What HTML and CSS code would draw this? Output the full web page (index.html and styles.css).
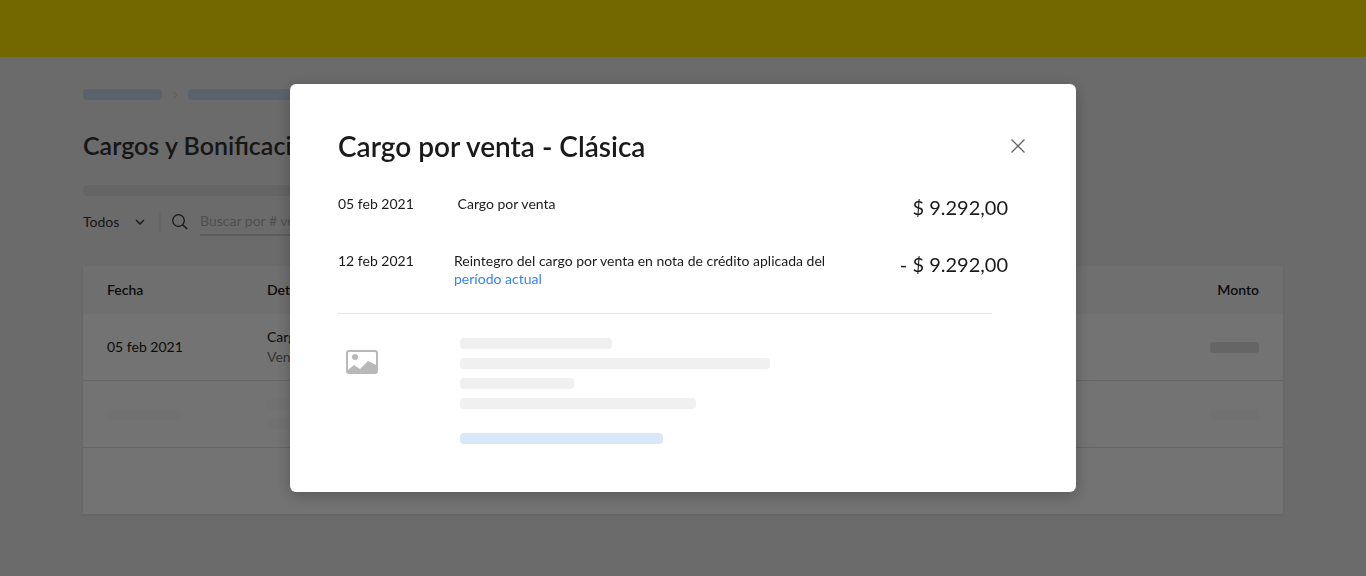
FILE: index.html
```
<!DOCTYPE html>
<html lang="es">
<head>
    <meta charset="UTF-8">
    <meta name="viewport" content="width=device-width, initial-scale=1.0">
    <title>Cargos y Bonificaciones</title>
    <link rel="stylesheet" href="styles.css">
</head>
<body>
    <header class="navbar"></header>

    <main class="page">
        <div class="breadcrumb">
            <span class="bar bar-link w-79"></span>
            <svg class="chevron" width="6" height="8" viewBox="0 0 6 8"><path d="M1 0.5 L5 4 L1 7.5" fill="none" stroke="#d0d0d0" stroke-width="1"/></svg>
            <span class="bar bar-link w-203"></span>
        </div>
        <h1>Cargos y Bonificaciones</h1>
        <div class="bar bar-intro"></div>

        <div class="filters">
            <select class="filter-select" aria-label="Filtrar">
                <option>Todos</option>
            </select>
            <svg class="arrow" width="10" height="6" viewBox="0 0 10 6"><path d="M1 1 L5 5 L9 1" fill="none" stroke="#333" stroke-width="1.4"/></svg>
            <label class="search">
                <svg width="16" height="16" viewBox="0 0 16 16"><circle cx="6.5" cy="6.5" r="5.8" fill="none" stroke="#333" stroke-width="1.3"/><path d="M10.7 10.7 L15.2 15" stroke="#333" stroke-width="1.5"/></svg>
                <input type="text" placeholder="Buscar por # venta" aria-label="Buscar por # venta">
            </label>
        </div>

        <table class="charges">
            <thead>
                <tr>
                    <th class="col-date">Fecha</th>
                    <th>Detalle</th>
                    <th class="col-amount">Monto</th>
                </tr>
            </thead>
            <tbody>
                <tr>
                    <td>05 feb 2021</td>
                    <td>Cargo por venta<br><span class="muted">Venta</span></td>
                    <td class="col-amount"><span class="bar bar-dark w-49"></span></td>
                </tr>
                <tr>
                    <td><span class="bar bar-faint w-73"></span></td>
                    <td>
                        <div class="bar bar-faint w-152"></div>
                        <div class="bar bar-faint bar-next w-114"></div>
                    </td>
                    <td class="col-amount"><span class="bar bar-faint w-49"></span></td>
                </tr>
                <tr>
                    <td></td>
                    <td></td>
                    <td></td>
                </tr>
            </tbody>
        </table>
    </main>

    <div class="overlay">
        <section class="modal" role="dialog" aria-modal="true" aria-labelledby="modal-title">
            <div class="modal-header">
                <h2 id="modal-title">Cargo por venta - Clásica</h2>
                <button class="close" type="button" aria-label="Cerrar">
                    <svg width="14" height="14" viewBox="0 0 14 14"><path d="M0.5 0.5 L13.5 13.5 M13.5 0.5 L0.5 13.5" stroke="#666" stroke-width="1.3"/></svg>
                </button>
            </div>

            <div class="movement">
                <span class="date">05 feb 2021</span>
                <p class="description">&nbsp;Cargo por venta</p>
                <span class="amount">$ 9.292,00</span>
            </div>
            <div class="movement">
                <span class="date">12 feb 2021</span>
                <p class="description">Reintegro del cargo por venta en nota de crédito aplicada del <a href="#">período actual</a></p>
                <span class="amount">- $ 9.292,00</span>
            </div>

            <div class="product">
                <svg class="picture" width="32" height="24" viewBox="0 0 32 24">
                    <rect x="1" y="1" width="30" height="22" rx="2" fill="none" stroke="#b9b9b9" stroke-width="2"/>
                    <circle cx="9" cy="7" r="3" fill="#b9b9b9"/>
                    <path d="M2 20 L8 15 L14 19 L22 11 L31 15.5 V23 H2 Z" fill="#b9b9b9"/>
                </svg>
                <div class="product-info">
                    <div class="bar w-152"></div>
                    <div class="bar w-310"></div>
                    <div class="bar w-114"></div>
                    <div class="bar w-236"></div>
                    <div class="bar bar-action w-203"></div>
                </div>
            </div>
        </section>
    </div>
</body>
</html>
```
FILE: styles.css
```
* {
    box-sizing: border-box;
}
body {
    font-family: Lato, "Liberation Sans", sans-serif;
    font-size: 14px;
    line-height: 18px;
    margin: 0;
    min-height: 100vh;
    color: #1a1a1a;
    background-color: #ededed;
}
.navbar {
    height: 57px;
    background-color: #ffe600;
}
.page {
    max-width: 1200px;
    margin: 0 auto;
}
h1 {
    margin: 30px 0 24px;
    font-size: 25px;
    line-height: 31px;
    font-weight: 600;
    color: #333;
}

/* Placeholder bars */
.bar {
    display: block;
    height: 11px;
    border-radius: 4px;
    background-color: #f0f0f0;
}
.bar-link {
    background-color: #c8dcf0;
}
.bar-action {
    margin-top: 15px;
    background-color: #d9e7fa;
}
.bar-intro {
    width: 40%;
    background-color: #dfdfdf;
}
.bar-dark {
    background-color: #e0e0e0;
}
.bar-faint {
    background-color: #fafafa;
}
.bar-next {
    margin-top: 8px;
}
.w-49 { width: 49px; }
.w-73 { width: 73px; }
.w-79 { width: 79px; }
.w-114 { width: 114px; }
.w-152 { width: 152px; }
.w-203 { width: 203px; }
.w-236 { width: 236px; }
.w-310 { width: 310px; }

.breadcrumb {
    display: flex;
    align-items: center;
    gap: 10px;
    padding-top: 32px;
}

.filters {
    display: flex;
    align-items: center;
    height: 30px;
    margin-top: 11px;
}
.filter-select {
    appearance: none;
    width: 52px;
    padding: 0;
    border: 0;
    background: none;
    font: inherit;
    color: #333;
}
.search {
    display: flex;
    align-items: center;
    gap: 12px;
    height: 22px;
    margin-left: 14px;
    padding-left: 11px;
    border-left: 2px solid #dfdfdf;
}
.search input {
    width: 240px;
    height: 28px;
    padding: 0 0 2px;
    border: 0;
    border-bottom: 2px solid #ccc;
    background: none;
    font: inherit;
}
.search input::placeholder {
    color: #b0b0b0;
}

.charges {
    width: 100%;
    margin-top: 29px;
    border-spacing: 0;
    background-color: #fff;
    box-shadow: 0 1px 2px rgba(0, 0, 0, 0.1);
}
.charges th {
    height: 48px;
    padding: 0 24px;
    background-color: #f5f5f5;
    text-align: left;
    font-weight: 600;
}
.charges td {
    height: 67px;
    padding: 0 24px;
    line-height: 20px;
    border-bottom: 1px solid #e3e3e3;
}
.charges tr:last-child td {
    height: 66px;
    border-bottom: 0;
}
.charges .col-date {
    width: 160px;
}
.charges .col-amount {
    text-align: right;
}
.col-amount .bar {
    margin-left: auto;
}
.muted {
    color: #777;
}

.overlay {
    position: fixed;
    inset: 0;
    display: flex;
    align-items: center;
    justify-content: center;
    background-color: rgba(0, 0, 0, 0.55);
}
.modal {
    width: 90%;
    max-width: 786px;
    padding: 46px 48px 48px;
    border-radius: 6px;
    background-color: #fff;
    box-shadow: 0 4px 16px rgba(0, 0, 0, 0.25);
}
.modal-header {
    display: flex;
    align-items: center;
    justify-content: space-between;
    margin-bottom: 33px;
}
.modal-header h2 {
    margin: 0;
    font-size: 28px;
    line-height: 32px;
    font-weight: 600;
}
.close {
    display: flex;
    padding: 3px;
    border: 0;
    background: none;
    cursor: pointer;
}
.movement {
    display: flex;
    min-height: 57px;
    padding-right: 20px;
}
.date {
    width: 116px;
}
.description {
    flex: 1;
    max-width: 400px;
    margin: 0;
}
.description a {
    color: #3483fa;
    text-decoration: none;
}
.amount {
    margin-left: auto;
    font-size: 20px;
    line-height: 24px;
}
.product {
    display: flex;
    gap: 82px;
    margin: 4px 36px 0 0;
    padding: 24px 8px 0;
    border-top: 1px solid #e6e6e6;
}
.picture {
    margin-top: 12px;
}
.product-info {
    display: flex;
    flex-direction: column;
    gap: 9px;
}
```
